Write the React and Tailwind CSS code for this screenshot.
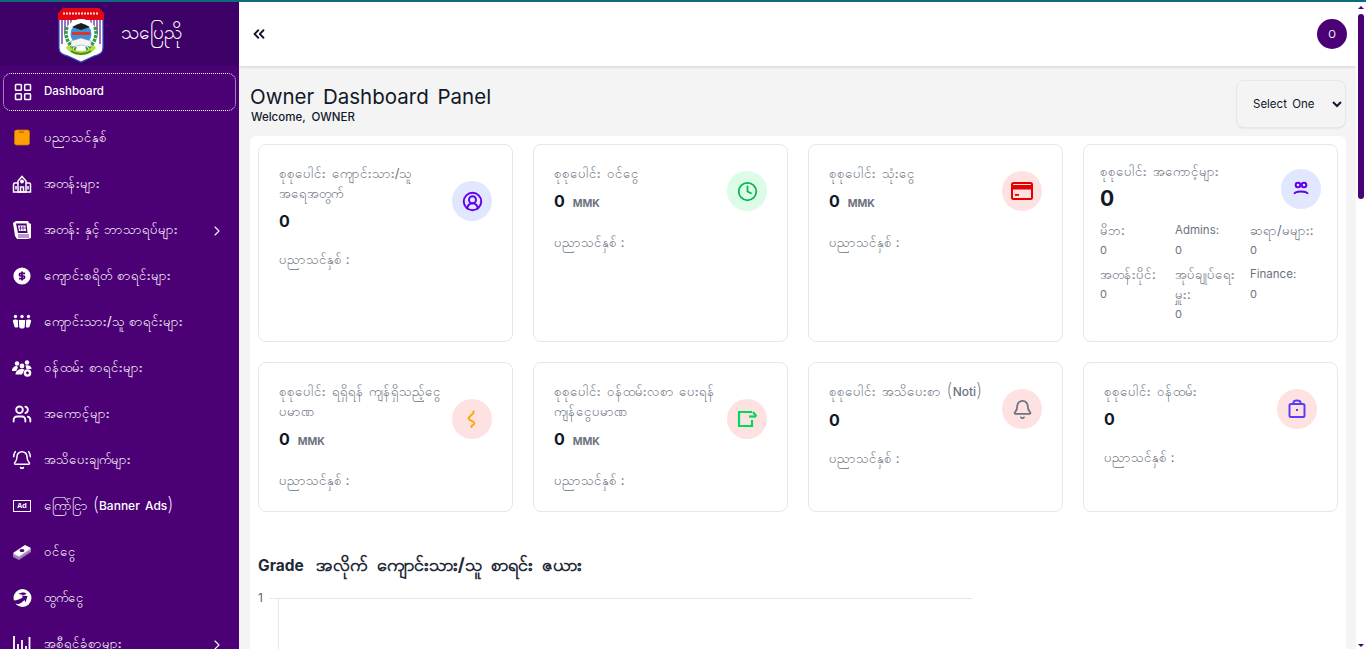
import { ChevronRight, ChevronsLeft, LayoutGrid, CircleUserRound, Clock, Bell, BellRing, Users } from 'lucide-react'

const FONT = 'Inter, "Liberation Sans", sans-serif'

function Logo() {
  return (
    <svg width="48" height="58" viewBox="0 0 48 58" className="shrink-0">
      <path d="M2 10h44v33c0 5-4 7-9 8l-13 6-13-6c-5-1-9-3-9-8z" fill="#fff" stroke="#3350c8" strokeWidth="1.200" />
      <path d="M5 13v26M8 13v17M11 13v10M14 13v6M43 13v26M40 13v17M37 13v10M34 13v6" stroke="#6a2aa0" strokeWidth="1.300" />
      <path d="M1 8l5-5h36l5 5v7H1z" fill="#e3080f" />
      <path d="M6 8.500h36" stroke="#ffd9d9" strokeWidth="2" strokeDasharray="2 1" />
      <path d="M9 43a19 19 0 0 0 30 0l-3-4H12z" fill="#b5de32" />
      <circle cx="24" cy="30" r="16" fill="#fff" />
      <path d="M10 22c-3 9 1 18 9 22M38 22c3 9-1 18-9 22" fill="none" stroke="#2e9b4a" strokeWidth="3.500" strokeDasharray="3 1" />
      <circle cx="24" cy="29" r="10.500" fill="#3d94da" />
      <path d="M15 22l9-4 9 4-9 3z" fill="#1d1d1d" />
      <rect x="15" y="27" width="18" height="3" fill="#e0322f" />
      <path d="M14 36l10-3 10 3v6l-10-2-10 2z" fill="#f6f6f6" stroke="#777" strokeWidth=".4" />
      <path d="M14 46c6 4 14 4 20 0" fill="none" stroke="#4a8f20" strokeWidth="2" />
    </svg>
  )
}

function NavIcon({ name }) {
  const box = 'w-5 h-5 text-white'
  if (name === 'grid') return <LayoutGrid className={box} strokeWidth={1.8} />
  if (name === 'book') return (
    <svg viewBox="0 0 20 20" className="w-5 h-5"><rect x="2.500" y="2" width="15" height="15" rx="2" fill="#ff9f00" stroke="#c97a00" strokeWidth=".7" /><rect x="7" y="3.500" width="5" height="1.200" fill="#a96600" /></svg>
  )
  if (name === 'school') return (
    <svg viewBox="0 0 20 20" className="w-5 h-5" fill="none" stroke="#fff" strokeWidth="1.500"><path d="M6 7l4-4.500L14 7v11H6z" /><path d="M6 9H3c-1 0-1.500.5-1.500 1.500V18h17v-7.500c0-1-.5-1.500-1.500-1.500h-3" /><circle cx="10" cy="7.500" r="1.200" fill="#fff" /><path d="M8.500 18v-5h3v5M4 12v3.500M16 12v3.500" /></svg>
  )
  if (name === 'books') return (
    <svg viewBox="0 0 20 20" className="w-5 h-5"><path d="M1 3l3-2h12l1 2 2 1v14l-3 1H5l-2-3z" fill="#fff" /><path d="M4 3.500h10.500l1 9.500H6z" fill="#4b0076" /><path d="M6 5.500h7.500l.5 5.500H7z" fill="#fff" /><path d="M8.500 6v4.500M11 6v4.500M7 8h7" stroke="#4b0076" strokeWidth=".7" /><path d="M6 15h11M6 17h11" stroke="#4b0076" strokeWidth=".8" /></svg>
  )
  if (name === 'fee') return (
    <svg viewBox="0 0 20 20" className="w-5 h-5"><circle cx="10" cy="10" r="8.600" fill="#fff" /><path d="M13 7.400H8.600c-1.600 0-1.600 2.600 0 2.600h2.800c1.600 0 1.600 2.600 0 2.600H7M10 5.500v9" stroke="#4b0076" strokeWidth="1.700" fill="none" /></svg>
  )
  if (name === 'students') return (
    <svg viewBox="0 0 20 20" className="w-5 h-5" fill="#fff"><circle cx="10" cy="4.500" r="1.700" /><circle cx="3.500" cy="4.500" r="1.700" /><circle cx="16.500" cy="4.500" r="1.700" /><path d="M6.800 8h6.400l-.5 7c-.2 2-5.200 2-5.400 0z" /><path d="M.8 9c0-1 1-1.500 2.700-1.500 1 0 1.800.2 2.300.6L6.200 15c-1 .8-2.800.8-3.600.1z" /><path d="M19.200 9c0-1-1-1.500-2.700-1.500-1 0-1.800.2-2.300.6L13.800 15c1 .8 2.800.8 3.600.1z" /></svg>
  )
  if (name === 'staff') return (
    <svg viewBox="0 0 20 20" className="w-5 h-5" fill="#fff"><circle cx="5" cy="5.500" r="2.200" /><circle cx="15" cy="4.500" r="2.200" /><circle cx="10" cy="8" r="2.400" /><path d="M0 13c0-3 2-5 5-5l1 2c-1.200 1-1.500 2-1.500 3z" /><path d="M3.500 16.500c0-3.500 3-5.500 6.500-5.500 1 0 2 .2 2.500.6L10 16.500z" /><path d="M13.500 7.500c2.500-.8 6 0 6 3.500h-5z" /><circle cx="15.500" cy="15" r="3.800" /><circle cx="15.500" cy="15" r="1.400" fill="#4b0076" /></svg>
  )
  if (name === 'users') return <Users className={box} strokeWidth={2.200} />
  if (name === 'bell') return <BellRing className={box} strokeWidth={1.800} />
  if (name === 'ad') return (
    <div className="w-[18px] h-[12px] border border-white text-white flex items-center justify-center text-[8px] font-bold leading-none [font-family:'Liberation_Mono']">Ad</div>
  )
  if (name === 'cash') return (
    <svg viewBox="0 0 20 20" className="w-5 h-5"><path d="M1 12l12-8 6 3v3L7 18l-6-3z" fill="#c9bcd6" /><path d="M1 11l12-8 6 3L7 14z" fill="#fff" /><ellipse cx="10" cy="8.500" rx="2.500" ry="1.500" fill="#4b0076" /><path d="M1 13l6 3 12-8M1 14.500l6 3 12-8" stroke="#4b0076" strokeWidth=".5" fill="none" /></svg>
  )
  if (name === 'out') return (
    <svg viewBox="0 0 20 20" className="w-5 h-5"><circle cx="10.500" cy="10" r="9" fill="#fff" /><path d="M0 12.500c3 5 7 3.500 9 2.500l3.500-3 1 2.500 2-6.500-6-.5 1.500 1.800C8 11.500 4 13 0 12.500z" fill="#4b0076" /><path d="M6.500 6c3-2 7-2 8 0l-3 1z" fill="#4b0076" /></svg>
  )
  if (name === 'chart') return (
    <svg viewBox="0 0 20 20" className="w-5 h-5" fill="none" stroke="#fff" strokeWidth="1.800"><path d="M2 2v16h16.500M6 16V10M10 16V6M14 16v-4M17.500 16V3" /></svg>
  )
  return null
}

const NAV = [
  { icon: 'grid', label: 'Dashboard', active: true },
  { icon: 'book', label: 'ပညာသင်နှစ်' },
  { icon: 'school', label: 'အတန်းများ' },
  { icon: 'books', label: 'အတန်း နှင့် ဘာသာရပ်များ', arrow: true },
  { icon: 'fee', label: 'ကျောင်းစရိတ် စာရင်းများ' },
  { icon: 'students', label: 'ကျောင်းသား/သူ စာရင်းများ' },
  { icon: 'staff', label: 'ဝန်ထမ်း စာရင်းများ' },
  { icon: 'users', label: 'အကောင့်များ' },
  { icon: 'bell', label: 'အသိပေးချက်များ' },
  { icon: 'ad', label: 'ကြော်ငြာ', extra: 'Banner Ads' },
  { icon: 'cash', label: 'ဝင်ငွေ' },
  { icon: 'out', label: 'ထွက်ငွေ' },
  { icon: 'chart', label: 'အစီရင်ခံစာများ', arrow: true },
]

function Sidebar() {
  return (
    <aside className="w-[239px] shrink-0 h-full bg-[#4b0076] overflow-hidden text-white">
      <div className="h-[64px] bg-[#3d0066] flex items-start pl-[57px] gap-[16px] pt-[3px]">
        <Logo />
        <span className="text-[19px] leading-[56px] font-medium">သပြေညို</span>
      </div>
      <nav className="px-[3px] pt-[7px] flex flex-col">
        {NAV.map((item) => (
          <div
            key={item.label}
            className={`h-[38px] mb-2 flex items-center pl-[9px] pr-[12px] rounded-lg ${item.active ? 'border border-dotted border-white' : ''}`}
          >
            <div className="w-[20px] flex justify-center"><NavIcon name={item.icon} /></div>
            <span className={`flex-1 whitespace-nowrap ${item.active ? 'ml-[11px] text-[11.500px] font-medium' : 'ml-[12px] text-[13px] leading-[20px] -mt-[2px] [word-spacing:1px]'}`}>
              {item.label}
              {item.extra && (
                <>
                  {' '}<span className="text-[19px] font-extralight align-[-1px]">(</span>
                  <span className="text-[12px] font-medium [word-spacing:2px]">{item.extra}</span>
                  <span className="text-[19px] font-extralight align-[-1px]">)</span>
                </>
              )}
            </span>
            {item.arrow && <ChevronRight className="w-[16px] h-[16px] -mr-[1px] mt-[1px]" strokeWidth={1.600} />}
          </div>
        ))}
      </nav>
    </aside>
  )
}

function StatIcon({ bg, children }) {
  return <div className={`w-[40px] h-[40px] rounded-full shrink-0 flex items-center justify-center ${bg}`}>{children}</div>
}

function Amount({ mmk }) {
  return (
    <p className="text-[16px] font-bold text-[#111827] leading-[24px] flex items-baseline">
      0{mmk && <span className="ml-[8px] text-[10.500px] text-[#6b7280]">MMK</span>}
    </p>
  )
}

function StatCard({ title, extra, mmk, icon, bg, tall }) {
  return (
    <div className="border border-[#e5e7eb] rounded-lg pl-[20px] pr-[20px] pt-[18px] flex items-start">
      <div className="flex-1 min-w-0">
        <p className="text-[13px] leading-[20px] text-[#6b7280] [word-spacing:2px] whitespace-pre">
          {title}
          {extra && (
            <>
              {' '}<span className="text-[19px] font-extralight align-[-1px]">(</span>
              <span className="text-[12px] font-medium">{extra}</span>
              <span className="text-[19px] font-extralight align-[-1px]">)</span>
            </>
          )}
        </p>
        <div className="mt-[6px]"><Amount mmk={mmk} /></div>
        <p className="text-[13px] leading-[20px] text-[#6b7280] mt-[16px]">ပညာသင်နှစ် :</p>
      </div>
      <div className={tall ? 'mt-[18px]' : 'mt-[8px]'}>
        <StatIcon bg={bg}>{icon}</StatIcon>
      </div>
    </div>
  )
}

const ACCOUNT_ROLES = [
  { name: 'မိဘ:' },
  { name: 'Admins:', latin: true },
  { name: 'ဆရာ/မများ:' },
  { name: 'အတန်းပိုင်:' },
  { name: 'အုပ်ချုပ်ရေး\nမှူး:' },
  { name: 'Finance:', latin: true },
]

function AccountCard() {
  return (
    <div className="border border-[#e5e7eb] rounded-lg px-[16px] pt-[16px]">
      <div className="flex justify-between h-[58px]">
        <div>
          <p className="text-[13px] leading-[20px] text-[#6b7280] [word-spacing:2px]">စုစုပေါင်း အကောင့်များ</p>
          <p className="text-[21px] font-bold text-[#111827] leading-[28px] mt-[4px]">0</p>
        </div>
        <div className="mt-[8px]">
          <StatIcon bg="bg-[#e0e7ff]">
            <svg viewBox="0 0 20 20" className="w-5 h-5" fill="none" stroke="#6200ea" strokeWidth="2"><circle cx="7" cy="6" r="2.300" /><circle cx="13" cy="6" r="2.300" /><path d="M3.500 15c0-2 2-2.500 6.500-2.500s6.500.5 6.500 2.500" /></svg>
          </StatIcon>
        </div>
      </div>
      <div className="grid grid-cols-[75px_75px_1fr] leading-[20px] text-[#6b7280] mt-[1px]">
        {ACCOUNT_ROLES.map((r) => (
          <div key={r.name} className="pb-[4px]">
            <p className={`whitespace-pre-wrap ${r.latin ? 'text-[11.500px]' : 'text-[13px]'}`}>{r.name}</p>
            <p className="text-[11px]">0</p>
          </div>
        ))}
      </div>
    </div>
  )
}

function CardIcon() {
  return (
    <svg viewBox="0 0 22 22" className="w-[22px] h-[22px]"><rect x="1" y="3" width="20" height="16" rx="1.500" fill="none" stroke="#e60000" strokeWidth="2" /><rect x="1" y="5" width="20" height="4.500" fill="#e60000" /><rect x="4" y="14" width="4" height="1.800" fill="#e60000" /></svg>
  )
}

const CARDS_TOP = [
  { title: 'စုစုပေါင်း ကျောင်းသား/သူ\nအရေအတွက်', tall: true, icon: <CircleUserRound className="w-[21px] h-[21px] text-[#6200ea]" strokeWidth={2.200} />, bg: 'bg-[#e0e7ff]' },
  { title: 'စုစုပေါင်း ဝင်ငွေ', mmk: true, icon: <Clock className="w-[21px] h-[21px] text-[#00b84f]" strokeWidth={2} />, bg: 'bg-[#dcfce7]' },
  { title: 'စုစုပေါင်း သုံးငွေ', mmk: true, icon: <CardIcon />, bg: 'bg-[#fee2e2]' },
]

const CARDS_BOTTOM = [
  {
    title: 'စုစုပေါင်း ရရှိရန် ကျန်ရှိသည့်ငွေ\nပမာဏ',
    tall: true,
    mmk: true,
    icon: <svg viewBox="0 0 20 20" className="w-5 h-5" fill="none" stroke="#ffa500" strokeWidth="1.800"><path d="M11.500 1.500v2.500L7 8.500c-1 1 0 2 1 2.500l3.500 2c1 .7 1 1.700.2 2.500L9.500 17v2" /></svg>,
    bg: 'bg-[#fee2e2]',
  },
  {
    title: 'စုစုပေါင်း ဝန်ထမ်းလစာ ပေးရန်\nကျန်ငွေပမာဏ',
    tall: true,
    mmk: true,
    icon: <svg viewBox="0 0 20 20" className="w-5 h-5" fill="none" stroke="#00d95f" strokeWidth="2.200"><path d="M15 11v6H2V3h13" /><path d="M12 7.500h7" /><path d="M16 3l3.500 4.500" /></svg>,
    bg: 'bg-[#fee2e2]',
  },
  { title: 'စုစုပေါင်း အသိပေးစာ', extra: 'Noti', icon: <Bell className="w-[21px] h-[21px] text-[#6b7280]" strokeWidth={2} />, bg: 'bg-[#fee2e2]' },
  {
    title: 'စုစုပေါင်း ဝန်ထမ်း',
    icon: <svg viewBox="0 0 20 20" className="w-5 h-5" fill="none" stroke="#5b3df5" strokeWidth="2"><rect x="2.500" y="5" width="15" height="13" rx="1.500" /><path d="M6.500 5V3.500C6.500 2 8 1.500 10 1.500s3.500.5 3.500 2V5M10 10v2" /></svg>,
    bg: 'bg-[#fee2e2]',
  },
]

// the browser hides real scrollbars in the screenshot, so this strip stands in for it
function ScrollStrip() {
  return (
    <div className="w-[10px] shrink-0 h-full bg-white flex flex-col items-start pl-[2px]">
      <div className="mt-[4px] w-0 h-0 border-x-[3px] border-x-transparent border-b-[3px] border-b-[#4b0076]" />
      <div className="mt-[5px] w-[6px] h-[185px] rounded-full bg-[#4b0076]" />
      <div className="mt-auto mb-[2px] w-0 h-0 border-x-[3px] border-x-transparent border-t-[3px] border-t-[#4b0076]" />
    </div>
  )
}

export default function App() {
  return (
    <div className="h-screen overflow-hidden flex border-t-2 border-[#0f6b7a]" style={{ fontFamily: FONT }}>
      <Sidebar />
      <div className="flex-1 min-w-0 h-full overflow-hidden bg-[#f4f4f5]">
        <header className="h-[64px] bg-white shadow-[0_1px_3px_rgba(0,0,0,0.15)] flex items-center justify-between pl-[11px] pr-[9px]">
          <ChevronsLeft className="w-[18px] h-[18px] text-[#111827]" strokeWidth={2.400} />
          <div className="w-[30px] h-[30px] rounded-full bg-[#4b0076] text-white text-[10px] flex items-center justify-center">O</div>
        </header>
        <div className="pl-[11px] pr-[10px]">
          <div className="flex items-start justify-between pt-[14px] h-[70px]">
            <div>
              <h1 className="text-[20.500px] leading-[30px] pt-[2px] text-[#111827] [word-spacing:3px]">Owner Dashboard Panel</h1>
              <p className="text-[11.500px] leading-[10px] font-medium text-[#111827] pl-px [word-spacing:3px]">Welcome, OWNER</p>
            </div>
            <select defaultValue="" className="w-[110px] h-[48px] border border-[#e5e7eb] rounded-lg pl-[12px] pr-[2px] text-[11.500px] [word-spacing:2px] text-[#111827] bg-[#f4f4f5] shadow-[0_1px_1px_rgba(0,0,0,0.05)]">
              <option value="">Select One</option>
            </select>
          </div>
          <div className="bg-white rounded-md px-[8px] pt-[8px] h-[520px]">
            <div className="grid grid-cols-4 gap-x-[20px] gap-y-[20px] grid-rows-[198px_150px]">
              {CARDS_TOP.map((c) => <StatCard key={c.title} {...c} />)}
              <AccountCard />
              {CARDS_BOTTOM.map((c) => <StatCard key={c.title} {...c} />)}
            </div>
            <h2 className="h-[24px] leading-[24px] text-[15.500px] font-bold text-[#1f2937] mt-[41px] [word-spacing:9px] whitespace-nowrap">
              Grade <span className="text-[18px] [word-spacing:5px]">အလိုက် ကျောင်းသား/သူ စာရင်း ဇယား</span>
            </h2>
            <div className="mt-[14px] flex">
              <span className="w-[10px] text-[12px] leading-[14px] text-[#666]">1</span>
              <div className="ml-[1px] w-[703px] h-[100px] relative">
                <div className="h-px w-full bg-[#e5e7eb] mt-[7px]" />
                <div className="absolute left-[9px] top-[7px] bottom-0 w-px bg-[#e5e7eb]" />
              </div>
            </div>
          </div>
        </div>
      </div>
      <ScrollStrip />
    </div>
  )
}
